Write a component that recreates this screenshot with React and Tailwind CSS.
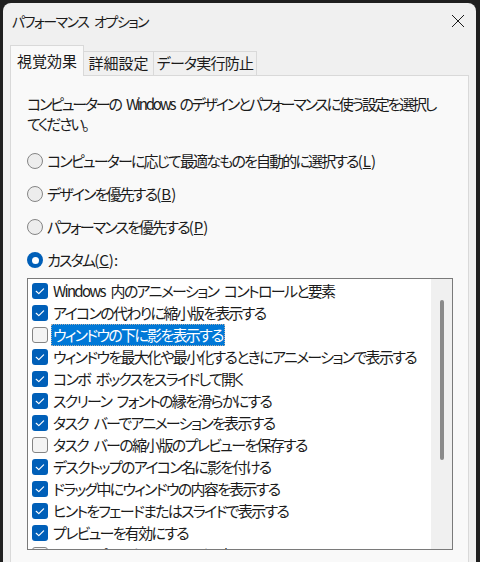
import { useState } from "react";

const items = [
  { label: "Windows 内のアニメーション コントロールと要素", on: true },
  { label: "アイコンの代わりに縮小版を表示する", on: true },
  { label: "ウィンドウの下に影を表示する", on: false, focus: true },
  { label: "ウィンドウを最大化や最小化するときにアニメーションで表示する", on: true },
  { label: "コンボ ボックスをスライドして開く", on: true },
  { label: "スクリーン フォントの縁を滑らかにする", on: true },
  { label: "タスク バーでアニメーションを表示する", on: true },
  { label: "タスク バーの縮小版のプレビューを保存する", on: false },
  { label: "デスクトップのアイコン名に影を付ける", on: true },
  { label: "ドラッグ中にウィンドウの内容を表示する", on: true },
  { label: "ヒントをフェードまたはスライドで表示する", on: true },
  { label: "プレビューを有効にする", on: true },
  { label: "マウス ポインターの下に影を表示する", on: false },
];

const radios = [
  { label: "コンピューターに応じて最適なものを自動的に選択する", key: "L" },
  { label: "デザインを優先する", key: "B" },
  { label: "パフォーマンスを優先する", key: "P" },
  { label: "カスタム", key: "C", colon: true },
];

function Radio({ checked }) {
  if (checked) {
    return (
      <span className="w-4 h-4 rounded-full bg-[#005fb8] flex items-center justify-center shrink-0">
        <span className="w-[7px] h-[7px] rounded-full bg-white" />
      </span>
    );
  }
  return <span className="w-4 h-4 rounded-full border border-[#858585] bg-[#ededed] shrink-0" />;
}

function Check({ on }) {
  if (!on) {
    return <span className="w-4 h-4 rounded-[3px] border border-[#858585] bg-[#f4f4f4] shrink-0" />;
  }
  return (
    <span className="w-4 h-4 rounded-[3px] bg-[#005fb8] flex items-center justify-center shrink-0">
      <svg width="16" height="16" viewBox="0 0 16 16">
        <path d="M4.2 8.3 L6.8 10.6 L11.6 5.8" fill="none" stroke="white" strokeWidth="1.2" strokeLinecap="round" strokeLinejoin="round" />
      </svg>
    </span>
  );
}

export default function App() {
  const [mode, setMode] = useState(3);

  return (
    <div className="w-[480px] h-[562px] bg-[#1f1f1f] pt-[3px] pl-[3px] pr-[4px] overflow-hidden font-['Noto_Sans_CJK_JP',sans-serif] [font-feature-settings:'palt'] text-[15px] tracking-[-1.7px] [word-spacing:4px] text-[#1b1b1b]">
      <div className="h-[600px] bg-[#f0f0f0] rounded-t-[8px] flex flex-col">

        {/* TITLE BAR */}
        <div className="h-[36px] flex items-center justify-between pl-[9px] pr-[11px]">
          <span className="text-[14px] tracking-[-1.5px]">パフォーマンス オプション</span>
          <svg width="14" height="14" viewBox="0 0 14 14">
            <path d="M1 1 L13 13 M13 1 L1 13" stroke="#1b1b1b" strokeWidth="1" />
          </svg>
        </div>

        {/* TABS */}
        <div className="mt-[6px] px-[7px] flex items-end relative z-10 -mb-px tracking-normal">
          <div className="w-[74px] h-[31px] border border-b-0 border-[#d9d9d9] bg-[#f9f9f9] flex items-center justify-center">
            視覚効果
          </div>
          <div className="w-[70px] h-[25px] border border-l-0 border-[#d9d9d9] bg-[#f0f0f0] flex items-center justify-center">
            詳細設定
          </div>
          <div className="w-[103px] h-[25px] border border-l-0 border-[#d9d9d9] bg-[#f0f0f0] flex items-center justify-center tracking-[-0.8px]">
            データ実行防止
          </div>
        </div>

        {/* PANEL */}
        <div className="mx-[7px] flex-1 border border-[#d9d9d9] bg-[#f9f9f9] pl-[16px] pr-[15px] pt-[18px]">
          <p className="leading-[20px] whitespace-nowrap tracking-[-2.2px]">
            コンピューターの Windows のデザインとパフォーマンスに使う設定を選択し
            <br />
            てください。
          </p>

          <div className="mt-[16px] flex flex-col gap-[11px]">
            {radios.map((r, i) => (
              <div key={r.key} className="h-[22px] flex items-center gap-[4px]" onClick={() => setMode(i)}>
                <Radio checked={mode === i} />
                <span className="tracking-[-1.85px]">
                  {r.label}
                  <span className="tracking-[0px]">(<u>{r.key}</u>){r.colon ? ":" : ""}</span>
                </span>
              </div>
            ))}
          </div>

          {/* LIST */}
          <div className="mt-[7px] h-[272px] border border-[#7a7a7a] bg-white flex overflow-hidden">
            <div className="flex-1 pt-px pl-[4px] overflow-hidden">
              {items.map((it) => (
                <div key={it.label} className="h-[22px] flex items-center gap-[3px] whitespace-nowrap">
                  <Check on={it.on} />
                  {it.focus ? (
                    <span className="h-[22px] flex items-center px-[2px] bg-[#0078d7] text-white outline outline-1 outline-dotted outline-[#b0b0b0] -outline-offset-1">
                      {it.label}
                    </span>
                  ) : (
                    <span className="px-[2px]">{it.label}</span>
                  )}
                </div>
              ))}
            </div>
            <div className="w-[21px] bg-[#f0f0f0] flex justify-center pt-[21px]">
              <div className="w-[4px] h-[160px] rounded-full bg-[#8a8a8a]" />
            </div>
          </div>
        </div>
      </div>
    </div>
  );
}
